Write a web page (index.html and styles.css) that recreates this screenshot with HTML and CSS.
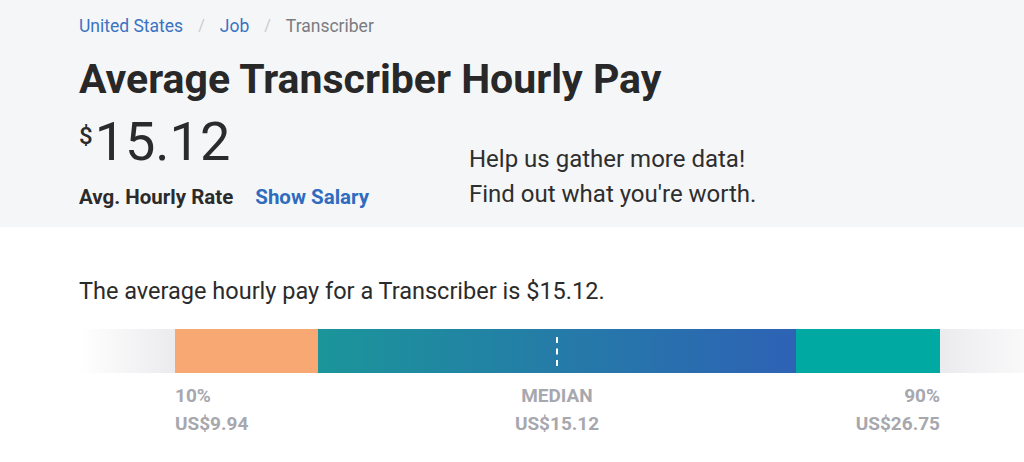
FILE: index.html
```html
<!DOCTYPE html>
<html>
<head>
<meta charset="utf-8">
<link rel="stylesheet" href="styles.css">
</head>
<body>
<header class="hero">
  <nav class="crumbs">
    <a class="crumb-link">United States</a>
    <span class="sep">/</span>
    <a class="crumb-link">Job</a>
    <span class="sep">/</span>
    <span class="crumb-current">Transcriber</span>
  </nav>
  <h1 class="title">Average Transcriber Hourly Pay</h1>
  <div class="hero-row">
    <div class="pay">
      <div class="amount"><span class="cur">$</span>15.12</div>
      <div class="rate-row">
        <span class="rate-label">Avg. Hourly Rate</span>
        <a class="show-salary">Show Salary</a>
      </div>
    </div>
    <div class="help">
      <p>Help us gather more data!</p>
      <p>Find out what you're worth.</p>
    </div>
  </div>
</header>
<main class="content">
  <p class="summary">The average hourly pay for a Transcriber is $15.12.</p>
  <div class="chart">
    <div class="bar">
      <div class="fade-left"></div>
      <div class="seg-low"></div>
      <div class="seg-mid"><span class="median-line"></span></div>
      <div class="seg-high"></div>
      <div class="fade-right"></div>
    </div>
    <div class="labels">
      <div class="lbl lbl-low"><div>10%</div><div>US$9.94</div></div>
      <div class="lbl lbl-mid"><div>MEDIAN</div><div>US$15.12</div></div>
      <div class="lbl lbl-high"><div>90%</div><div>US$26.75</div></div>
    </div>
  </div>
</main>
</body>
</html>
```

FILE: styles.css
```css
* { box-sizing: border-box; }
html, body { margin: 0; padding: 0; }
body {
  font-family: Roboto, "Liberation Sans", sans-serif;
  color: #2b2b2b;
  background: #ffffff;
  overflow: hidden;
  width: 1024px;
  height: 462px;
}
.hero {
  background: #f5f6f8;
  height: 227px;
  padding: 15px 0 0 79px;
}
.crumbs {
  display: flex;
  align-items: center;
  gap: 15px;
  font-size: 17.5px;
  line-height: 22px;
}
.crumb-link { color: #3a73c2; }
.sep { color: #c9cacf; font-size: 16px; }
.crumb-current { color: #7b7c80; }
.title {
  margin: 18px 0 0 0;
  font-size: 41px;
  line-height: 48px;
  font-weight: 700;
  color: #282828;
}
.hero-row {
  display: flex;
  margin-top: 9px;
}
.pay { width: 390px; }
.amount {
  font-size: 54px;
  line-height: 60px;
  font-weight: 400;
  color: #2b2b2b;
  display: flex;
  align-items: flex-start;
}
.cur {
  font-size: 24px;
  line-height: 24px;
  margin-top: 12px;
  margin-right: 2px;
  font-weight: 500;
}
.rate-row {
  display: flex;
  gap: 22px;
  margin-top: 12px;
  font-size: 20.5px;
  line-height: 26px;
  font-weight: 700;
}
.rate-label { color: #2b2b2b; }
.show-salary { color: #2f6cc0; }
.help {
  padding-top: 30px;
  font-size: 24px;
  line-height: 35px;
  color: #2e2e2e;
}
.help p { margin: 0; }
.content {
  padding: 49px 0 0 79px;
}
.summary {
  margin: 0;
  font-size: 23.5px;
  line-height: 30px;
  color: #2b2b2b;
}
.chart { margin-top: 23px; }
.bar {
  display: flex;
  height: 44px;
  width: 980px;
}
.fade-left {
  width: 96px;
  background: linear-gradient(to right, rgba(235,235,238,0), #ebebee);
}
.seg-low { width: 143px; background: #f7a873; }
.seg-mid {
  width: 478px;
  background: linear-gradient(to right, #1b959a, #2e62b5);
  position: relative;
}
.median-line {
  position: absolute;
  left: 238px;
  top: 8px;
  height: 29px;
  border-left: 2px dashed #ffffff;
}
.seg-high { width: 144px; background: #00a9a2; }
.fade-right {
  width: 119px;
  background: linear-gradient(to right, #ebebee, rgba(235,235,238,0));
}
.labels {
  display: flex;
  margin-left: 96px;
  width: 765px;
  margin-top: 9px;
  font-size: 19px;
  line-height: 28px;
  font-weight: 700;
  color: #a7a7ae;
}
.lbl-low { width: 200px; }
.lbl-mid { flex: 1; text-align: center; padding-right: 1px; }
.lbl-high { width: 200px; text-align: right; }
```
